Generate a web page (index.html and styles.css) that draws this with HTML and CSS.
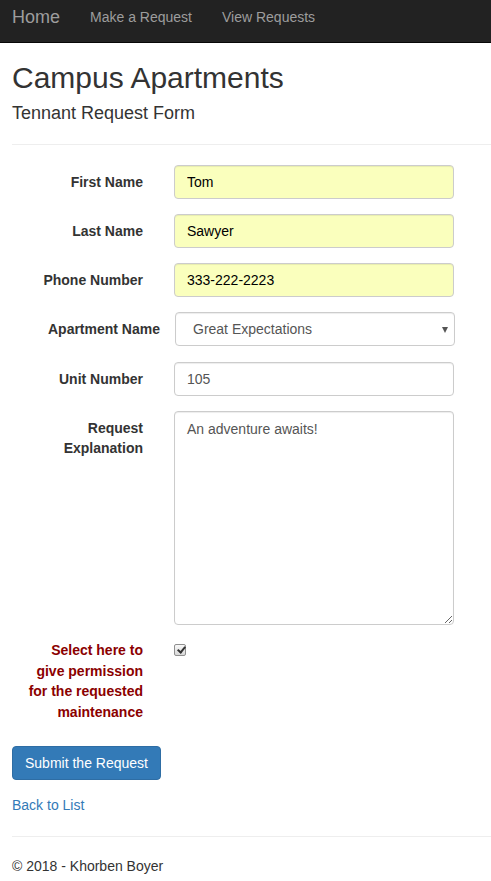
FILE: index.html
```html
<!DOCTYPE html>
<html lang="en">
<head>
<meta charset="utf-8">
<title>Campus Apartments - Tennant Request Form</title>
<link rel="stylesheet" href="styles.css">
</head>
<body>
<nav class="navbar">
  <a class="brand" href="#">Home</a>
  <a class="nav-link" href="#">Make a Request</a>
  <a class="nav-link" href="#">View Requests</a>
</nav>
<main class="container">
  <h2 class="title">Campus Apartments</h2>
  <h4 class="subtitle">Tennant Request Form</h4>
  <hr class="rule">
  <form class="form">
    <div class="row">
      <label class="label" for="fn">First Name</label>
      <input class="control autofill" id="fn" type="text" value="Tom">
    </div>
    <div class="row">
      <label class="label" for="ln">Last Name</label>
      <input class="control autofill" id="ln" type="text" value="Sawyer">
    </div>
    <div class="row">
      <label class="label" for="ph">Phone Number</label>
      <input class="control autofill" id="ph" type="text" value="333-222-2223">
    </div>
    <div class="row row-select">
      <label class="label label-wide" for="ap">Apartment Name</label>
      <div class="select-wrap">
        <select class="control select" id="ap">
          <option>Great Expectations</option>
        </select>
        <span class="caret"></span>
      </div>
    </div>
    <div class="row">
      <label class="label" for="un">Unit Number</label>
      <input class="control" id="un" type="text" value="105">
    </div>
    <div class="row">
      <label class="label" for="re">Request<br>Explanation</label>
      <textarea class="control textarea" id="re">An adventure awaits!</textarea>
    </div>
    <div class="row">
      <label class="label label-warn" for="ok">Select here to give permission for the requested maintenance</label>
      <div><input class="check" id="ok" type="checkbox" checked></div>
    </div>
    <button class="btn" type="button">Submit the Request</button>
  </form>
  <a class="back" href="#">Back to List</a>
  <hr class="rule rule-foot">
  <footer class="footer">© 2018 - Khorben Boyer</footer>
</main>
</body>
</html>
```
FILE: styles.css
```css
* { box-sizing: border-box; }
body {
  margin: 0;
  font-family: "Liberation Sans", Arial, sans-serif;
  font-size: 14px;
  line-height: 1.42857;
  color: #333;
  background: #fff;
}
.navbar {
  background: #222;
  border-bottom: 1px solid #080808;
  height: 43px;
  display: flex;
  align-items: flex-start;
  padding: 0 12px;
}
.brand {
  color: #9d9d9d;
  font-size: 18px;
  line-height: 20px;
  padding-top: 7px;
  text-decoration: none;
  margin-right: 30px;
}
.nav-link {
  color: #9d9d9d;
  font-size: 14px;
  line-height: 20px;
  padding-top: 7px;
  text-decoration: none;
  margin-right: 30px;
}
.container { padding: 0 12px; }
.title {
  font-size: 30px;
  font-weight: 500;
  line-height: 1.1;
  margin: 18px 0 10px;
}
.subtitle {
  font-size: 18px;
  font-weight: 500;
  line-height: 1.1;
  margin: 10px 0 10px;
}
.rule {
  border: 0;
  border-top: 1px solid #eee;
  margin: 20px -12px 20px 0;
}
.form { display: flex; flex-direction: column; }
.row {
  display: grid;
  grid-template-columns: 131px 280px;
  column-gap: 31px;
  margin-bottom: 15px;
}
.row-select { margin-bottom: 16px; }
.label {
  text-align: right;
  font-weight: bold;
  padding-top: 7px;
  line-height: 20px;
}
.label-wide { margin-right: -17px; }
.label-warn {
  color: #8b0000;
  padding-top: 0;
  line-height: 20.8px;
  width: 123px;
  justify-self: end;
}
.control {
  display: block;
  width: 280px;
  height: 34px;
  padding: 6px 12px;
  font-family: inherit;
  font-size: 14px;
  line-height: 20px;
  color: #555;
  background: #fff;
  border: 1px solid #ccc;
  border-radius: 4px;
  box-shadow: inset 0 1px 1px rgba(0,0,0,.075);
}
.autofill { background: #faffbd; color: #000; }
.select-wrap { position: relative; margin-left: 1px; width: 280px; }
.select {
  appearance: none;
  -webkit-appearance: none;
  padding-left: 17px;
}
.caret {
  position: absolute;
  right: 7px;
  top: 15px;
  width: 0;
  height: 0;
  border-left: 3.5px solid transparent;
  border-right: 3.5px solid transparent;
  border-top: 6px solid #555;
}
.textarea {
  height: 214px;
  resize: vertical;
  padding-top: 7px;
}
.check {
  appearance: none;
  -webkit-appearance: none;
  width: 12px;
  height: 12px;
  margin: 4px 0 0 0;
  border: 1px solid #8f8f8f;
  border-radius: 2px;
  background: linear-gradient(#f8f8f8, #d8d8d8);
  position: relative;
  display: block;
}
.check:checked::before {
  content: "";
  position: absolute;
  left: 3.5px;
  top: 0.5px;
  width: 3px;
  height: 6px;
  border-right: 2px solid #333;
  border-bottom: 2px solid #333;
  transform: rotate(40deg);
}
.btn {
  align-self: flex-start;
  height: 34px;
  padding: 6px 12px;
  font-family: inherit;
  font-size: 14px;
  line-height: 20px;
  color: #fff;
  background: #337ab7;
  border: 1px solid #2e6da4;
  border-radius: 4px;
  margin-top: 8px;
}
.back {
  display: inline-block;
  margin-top: 16px;
  color: #337ab7;
  text-decoration: none;
}
.rule-foot { margin: 20px -12px 20px 0; }
.footer { margin-top: 0; }
```
